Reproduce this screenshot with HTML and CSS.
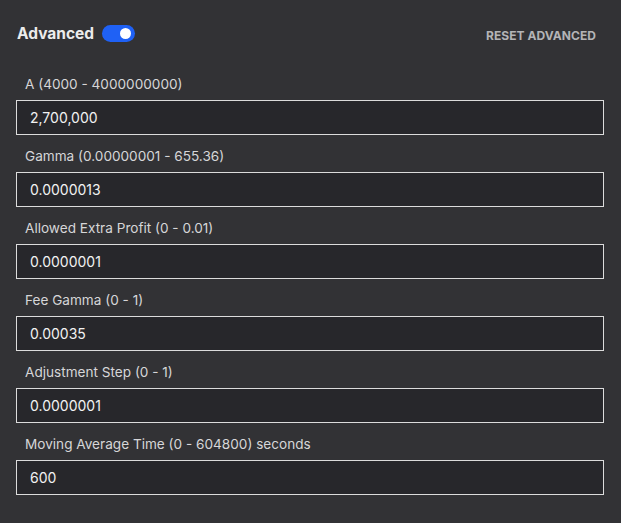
FILE: index.html
```html
<!DOCTYPE html>
<html>
<head>
<meta charset="utf-8">
<link rel="stylesheet" href="styles.css">
</head>
<body>
<div class="panel">
  <div class="header">
    <div class="title-group">
      <span class="title">Advanced</span>
      <span class="toggle"><span class="knob"></span></span>
    </div>
    <button class="reset">RESET ADVANCED</button>
  </div>
  <div class="fields">
    <div class="field">
      <label class="label">A (4000 - 4000000000)</label>
      <input class="input" type="text" value="2,700,000">
    </div>
    <div class="field">
      <label class="label">Gamma (0.00000001 - 655.36)</label>
      <input class="input" type="text" value="0.0000013">
    </div>
    <div class="field">
      <label class="label">Allowed Extra Profit (0 - 0.01)</label>
      <input class="input" type="text" value="0.0000001">
    </div>
    <div class="field">
      <label class="label">Fee Gamma (0 - 1)</label>
      <input class="input" type="text" value="0.00035">
    </div>
    <div class="field">
      <label class="label">Adjustment Step (0 - 1)</label>
      <input class="input" type="text" value="0.0000001">
    </div>
    <div class="field">
      <label class="label">Moving Average Time (0 - 604800) seconds</label>
      <input class="input" type="text" value="600">
    </div>
  </div>
</div>
</body>
</html>
```
FILE: styles.css
```css
html, body {
  margin: 0;
  padding: 0;
  background: #323235;
}
body {
  font-family: Inter, "Noto Sans", sans-serif;
  color: #f0f0f0;
}
.panel {
  width: 621px;
  height: 523px;
  box-sizing: border-box;
  padding: 16px 17px 0 16px;
}
.header {
  display: flex;
  align-items: center;
  justify-content: space-between;
  height: 34px;
}
.title-group {
  display: flex;
  align-items: center;
  gap: 8px;
  padding-left: 1px;
}
.title {
  font-size: 15.5px;
  font-weight: 700;
  color: #ececec;
}
.toggle {
  position: relative;
  display: inline-block;
  width: 33px;
  height: 17px;
  border-radius: 9px;
  background: #1f61f5;
}
.knob {
  position: absolute;
  right: 4px;
  top: 3px;
  width: 11px;
  height: 11px;
  border-radius: 50%;
  background: #ffffff;
}
.reset {
  background: none;
  border: none;
  padding: 0 8px 0 0;
  font-family: Inter, "Noto Sans", sans-serif;
  font-size: 12px;
  font-weight: 700;
  letter-spacing: 0.05px;
  color: #b4b4b6;
  margin-top: 4px;
}
.fields {
  margin-top: 26px;
  display: flex;
  flex-direction: column;
  gap: 13px;
}
.field {
  display: flex;
  flex-direction: column;
  gap: 8px;
}
.label {
  display: block;
  padding-left: 9px;
  font-size: 13.6px;
  line-height: 16px;
  color: #d6d6d8;
}
.input {
  box-sizing: border-box;
  width: 588px;
  height: 35px;
  margin: 0;
  padding: 0 13px;
  background: #27272b;
  border: 1.5px solid #dcdcdc;
  border-radius: 0;
  color: #f2f2f2;
  font-family: Inter, "Noto Sans", sans-serif;
  font-size: 14px;
  outline: none;
}
```
